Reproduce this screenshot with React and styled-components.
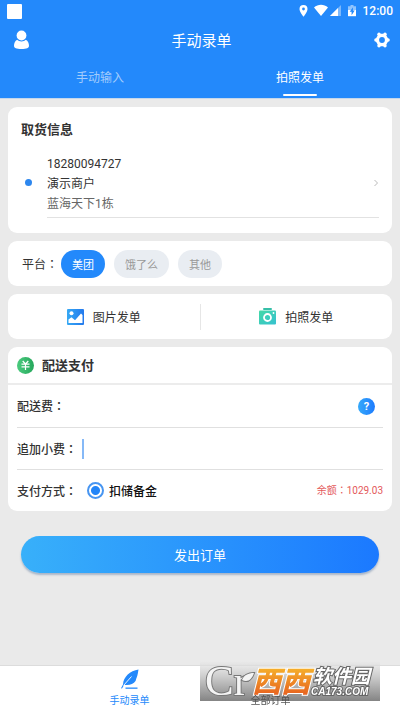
import React, { useState } from "react";
import styled, { createGlobalStyle } from "styled-components";

const GlobalStyle = createGlobalStyle`
  * {
    box-sizing: border-box;
  }
  body {
    margin: 0;
    background: #eaeaea;
    color: #333;
    font-family: "Noto Sans CJK SC", Roboto, sans-serif;
    font-size: 12px;
    line-height: 20px;
  }
  button,
  input {
    margin: 0;
    padding: 0;
    border: 0;
    background: none;
    color: inherit;
    font: inherit;
  }
  button {
    cursor: pointer;
  }
  svg {
    display: block;
    flex: none;
  }
`;

const Page = styled.div`
  display: flex;
  flex-direction: column;
  min-height: 100vh;
`;

const Header = styled.header`
  background: #2389fb;
  color: #fff;
  border-bottom: 1px solid #c5d8ec;
`;

const StatusBar = styled.div`
  display: flex;
  align-items: center;
  justify-content: space-between;
  height: 22px;
  padding: 0 7px;
`;

const StatusSquare = styled.div`
  width: 15px;
  height: 15px;
  border-radius: 1px;
  background: #fff;
`;

const StatusIcons = styled.div`
  display: flex;
  align-items: center;
  font-weight: 500;
`;

const Digits = styled.span`
  font-family: Roboto, "Noto Sans CJK SC", sans-serif;
`;

const Clock = styled(Digits)`
  margin-left: 6px;
`;

const TitleBar = styled.div`
  display: flex;
  align-items: center;
  justify-content: space-between;
  height: 35px;
  padding: 0 7px 0 10px;
`;

const Title = styled.h1`
  margin: 0;
  font-size: 15px;
  font-weight: 400;
`;

const IconButton = styled.button`
  display: flex;
  justify-content: center;
  width: 22px;
`;

const Tabs = styled.div`
  display: flex;
`;

const Tab = styled.button`
  flex: 1;
  display: flex;
  flex-direction: column;
  align-items: center;
  padding: 10px 0 2px;
  color: ${(props) => (props.$active ? "#fff" : "#a2ccfb")};

  &::after {
    content: "";
    width: 34px;
    height: 2px;
    margin-top: 7px;
    border-radius: 1px;
    background: ${(props) => (props.$active ? "#fff" : "transparent")};
  }
`;

const Main = styled.main`
  display: flex;
  flex-direction: column;
  gap: 8px;
  padding: 8px;
`;

const Card = styled.section`
  background: #fff;
  border-radius: 9px;
`;

const PickupCard = styled(Card)`
  padding: 12px 13px 15px;
`;

const CardTitle = styled.h2`
  margin: 0;
  font-size: 13px;
  line-height: 20px;
  font-weight: 700;
`;

const Address = styled.a`
  display: flex;
  align-items: center;
  margin-top: 14px;
  color: inherit;
  text-decoration: none;
`;

const Dot = styled.span`
  width: 7px;
  height: 7px;
  margin: 0 15px 6px 4px;
  border-radius: 50%;
  background: #2d87ee;
`;

const AddressBody = styled.span`
  flex: 1;
  display: flex;
  align-items: center;
  justify-content: space-between;
  padding-bottom: 4px;
  border-bottom: 1px solid #e2e2e2;
`;

const AddressLine = styled.span`
  display: block;
  height: 20px;
  color: ${(props) => (props.$muted ? "#666" : "#333")};
`;

const PlatformCard = styled(Card)`
  display: flex;
  align-items: center;
  gap: 9px;
  height: 45px;
  padding: 0 14px;
`;

const PlatformLabel = styled.span`
  margin-right: -6px;
`;

const Pill = styled.button`
  height: 28px;
  padding: 0 11px;
  border-radius: 14px;
  font-size: 11px;
  background: ${(props) => (props.$active ? "#2389fb" : "#e9edf2")};
  color: ${(props) => (props.$active ? "#fff" : "#999")};
`;

const SendCard = styled(Card)`
  display: flex;
  align-items: center;
  height: 45px;
`;

const SendButton = styled.button`
  flex: 1;
  display: flex;
  align-items: center;
  justify-content: center;
  gap: 9px;
  height: 26px;

  & + & {
    border-left: 1px solid #e6e6e6;
  }
`;

const PayHead = styled.div`
  display: flex;
  align-items: center;
  gap: 8px;
  height: 38px;
  padding: 0 9px;
  border-bottom: 2px solid #ececec;
`;

const PayRow = styled.div`
  display: flex;
  align-items: center;
  height: 42px;
  margin: 0 9px;

  & + & {
    border-top: 1px solid #e0e0e0;
  }
`;

const RowLabel = styled.label`
  font-weight: 500;
`;

const HelpButton = styled.button`
  width: 17px;
  height: 17px;
  margin: 0 8px 0 auto;
  border-radius: 50%;
  background: linear-gradient(90deg, #35a9fa, #1d7bfe);
  color: #fff;
  font-family: Roboto, sans-serif;
  font-size: 11px;
  line-height: 17px;
  font-weight: 700;
`;

const TipInput = styled.input`
  flex: 1;
  min-width: 0;
  height: 20px;
  margin-left: 5px;
  padding-left: 4px;
  border-left: 2px solid #86b9f7;
  outline: none;
`;

const Radio = styled.input`
  appearance: none;
  width: 17px;
  height: 17px;
  margin: 0 5px 0 10px;
  border: 2px solid #4795f1;
  border-radius: 50%;

  &:checked {
    background: radial-gradient(circle, #2385f8 4px, #fff 5px);
  }
`;

const RadioLabel = styled.label`
  color: #111;
  font-weight: 500;
`;

const Balance = styled(Digits)`
  margin-left: auto;
  color: #e4595b;
  font-size: 10px;
`;

const Submit = styled.button`
  height: 37px;
  margin: 17px 21px 24px;
  border-radius: 19px;
  background: linear-gradient(90deg, #38b0fa, #1b79ff);
  box-shadow: 0 2px 2px rgba(90, 120, 160, 0.45);
  color: #fff;
  font-size: 13px;
`;

const BottomNav = styled.nav`
  display: flex;
  height: 46px;
  margin-top: auto;
  padding: 0 59px;
  border-top: 1px solid #dcdcdc;
  background: #fff;
`;

const NavLink = styled.a`
  flex: 1;
  display: flex;
  flex-direction: column;
  align-items: center;
  justify-content: flex-end;
  gap: 2px;
  padding: 3px 0;
  color: ${(props) => (props.$active ? "#2389fb" : "#555")};
  font-size: 10px;
  line-height: 16px;
  text-decoration: none;
`;

const NavText = styled.span`
  position: relative;
  z-index: 2;
`;

const Watermark = styled.div`
  position: fixed;
  z-index: 1;
  right: 20px;
  bottom: 10px;
  pointer-events: none;
  background: linear-gradient(
    rgba(235, 235, 235, 0.6),
    rgba(195, 195, 195, 0.85) 40%,
    rgba(125, 125, 125, 0.95)
  );
`;

const UserIcon = () => (
  <svg width="17" height="20" viewBox="0 0 17 20" fill="#fff">
    <circle cx="8.5" cy="5.5" r="4.9" />
    <path d="M4.2 9.8C2 11 1 13.2 1 15.8 1 18 3.2 19 8.5 19S16 18 16 15.8c0-2.600-1-4.800-3.200-6-1.100 1.100-2.600 1.700-4.300 1.700s-3.200-.6-4.300-1.700z" />
  </svg>
);

const GearIcon = () => (
  <svg width="16" height="16" viewBox="0 0 16 16">
    <path
      d="M5.200 2.500L10.800 2.500L14 8L10.800 13.500L5.200 13.500L2 8Z"
      fill="#fff"
      stroke="#fff"
      strokeWidth="1.500"
      strokeLinejoin="round"
    />
    <g fill="#fff">
      <circle cx="5" cy="2.200" r="1.700" />
      <circle cx="11" cy="2.200" r="1.700" />
      <circle cx="14" cy="8" r="1.800" />
      <circle cx="11" cy="13.800" r="1.700" />
      <circle cx="5" cy="13.800" r="1.700" />
      <circle cx="2" cy="8" r="1.800" />
    </g>
    <circle cx="8" cy="8" r="2.900" fill="#2389fb" />
  </svg>
);

const DeviceIcons = () => (
  <svg width="58" height="14" viewBox="0 0 58 14" fill="#fff">
    <path
      fillRule="evenodd"
      d="M4.500 1a4 4 0 0 0-4 4c0 3.200 4 7.700 4 7.700s4-4.500 4-7.700a4 4 0 0 0-4-4zm0 2.600a1.400 1.400 0 1 1 0 2.800 1.400 1.400 0 0 1 0-2.800z"
    />
    <path d="M15 3.500C19-.1 25-.1 29 3.500L22 12z" />
    <path d="M42 1v11H31z" opacity=".4" />
    <path d="M39 4v8h-8z" />
    <path d="M51.500 1h3v1.200H57V6h-8V2.200h2.500z" opacity=".5" />
    <path d="M49 6h8v6.200h-8z" />
    <path d="M54 3.300L50.700 7.800h1.900v3.400l3.100-4.600h-1.800z" fill="#2389fb" />
  </svg>
);

const ChevronIcon = () => (
  <svg width="6" height="8" viewBox="0 0 6 8" fill="none" stroke="#bbb">
    <path d="M1.500 1l3 3-3 3" />
  </svg>
);

const PictureIcon = () => (
  <svg width="17" height="16" viewBox="0 0 17 16">
    <defs>
      <linearGradient id="picture">
        <stop stopColor="#36a9f4" />
        <stop offset="1" stopColor="#2379ed" />
      </linearGradient>
    </defs>
    <rect width="17" height="16" rx="1" fill="url(#picture)" />
    <circle cx="4.500" cy="4.300" r="2" fill="#fff" />
    <path d="M1.500 14V10.500l3-2.300 3.500 3 6-6.700 1.500 1.500V14z" fill="#fff" />
  </svg>
);

const CameraIcon = () => (
  <svg width="17" height="17" viewBox="0 0 17 17">
    <defs>
      <linearGradient id="camera" x2="1" y2="1">
        <stop stopColor="#43d9a6" />
        <stop offset="1" stopColor="#36c1d0" />
      </linearGradient>
    </defs>
    <rect x="4" y="0" width="9" height="2" rx="1" fill="#36bfa8" />
    <rect y="2.500" width="17" height="14" rx="1" fill="url(#camera)" />
    <circle cx="8.500" cy="9.500" r="3.500" fill="none" stroke="#fff" strokeWidth="1.800" />
    <circle cx="14.500" cy="5" r=".9" fill="#fff" />
  </svg>
);

const YuanIcon = () => (
  <svg width="17" height="17" viewBox="0 0 17 17">
    <defs>
      <linearGradient id="yuan">
        <stop stopColor="#4bcb7e" />
        <stop offset="1" stopColor="#26a75c" />
      </linearGradient>
    </defs>
    <circle cx="8.500" cy="8.500" r="8.500" fill="url(#yuan)" />
    <path
      d="M5.700 4l2.800 3 2.800-3M4.500 7.200h8M4.500 9.800h8M8.500 7v6"
      fill="none"
      stroke="#fff"
      strokeWidth="1.200"
    />
  </svg>
);

const FeatherIcon = () => (
  <svg width="20" height="21" viewBox="0 0 20 21" fill="#2389fb">
    <path d="M18.500.5C10 2 3.500 7.500 3 15.500L1 19.300l1 .3 2.200-3.800c4.600 1 9.300-.8 11.300-3.800.7-1.300.3-1.600 1.200-3.500C17.800 6 18 3 18.500.5z" />
    <path d="M3.500 16.500L11.500 7.500" fill="none" stroke="#fff" strokeWidth=".9" />
    <path d="M5.500 18.500h12v1.300h-12z" />
  </svg>
);

const WatermarkArt = () => (
  <svg width="180" height="40" viewBox="0 0 180 40" overflow="visible">
    <defs>
      <linearGradient id="orange" x2="0" y2="1">
        <stop offset=".2" stopColor="#f6b52c" />
        <stop offset="1" stopColor="#e4531d" />
      </linearGradient>
    </defs>
    <g fill="#f4f4f4" stroke="#777" strokeWidth="2" paintOrder="stroke">
      <text x="5" y="34" fontFamily="Liberation Serif, serif" fontSize="43">
        Cr
      </text>
      <path d="M42 19c2-5 6-7 12-7-2 6-6 10-12 7z" />
    </g>
    <g fontFamily="Noto Sans CJK SC, sans-serif" fontStyle="italic">
      <text
        x="52"
        y="31"
        fontSize="29"
        fontWeight="900"
        fill="url(#orange)"
        stroke="#fff"
        strokeWidth="2"
        paintOrder="stroke"
      >
        西西
      </text>
      <text
        x="113"
        y="22"
        fontSize="19"
        fontWeight="700"
        fill="#fff"
        stroke="#666"
        strokeWidth="2"
        paintOrder="stroke"
      >
        软件园
      </text>
    </g>
    <text
      x="111"
      y="34"
      fontFamily="Liberation Sans, sans-serif"
      fontSize="10"
      fontWeight="700"
      fontStyle="italic"
      fill="#fff"
      stroke="#666"
      strokeWidth="2"
      paintOrder="stroke"
    >
      CA173.COM
    </text>
  </svg>
);

// the zh-TW glyph sits in the middle of its cell
const ColonGlyph = styled.span`
  font-family: "Noto Sans CJK TC", sans-serif;
`;

const Colon = () => <ColonGlyph lang="zh-TW">：</ColonGlyph>;

const tabs = ["手动输入", "拍照发单"];
const platforms = ["美团", "饿了么", "其他"];

const App = () => {
  const [tab, setTab] = useState("拍照发单");
  const [platform, setPlatform] = useState("美团");

  return (
    <Page lang="zh-CN">
      <GlobalStyle />
      <Header>
        <StatusBar>
          <StatusSquare />
          <StatusIcons>
            <DeviceIcons />
            <Clock>12:00</Clock>
          </StatusIcons>
        </StatusBar>
        <TitleBar>
          <IconButton type="button" aria-label="我的">
            <UserIcon />
          </IconButton>
          <Title>手动录单</Title>
          <IconButton type="button" aria-label="设置">
            <GearIcon />
          </IconButton>
        </TitleBar>
        <Tabs>
          {tabs.map((name) => (
            <Tab
              key={name}
              type="button"
              $active={name === tab}
              onClick={() => setTab(name)}
            >
              {name}
            </Tab>
          ))}
        </Tabs>
      </Header>

      <Main>
        <PickupCard>
          <CardTitle>取货信息</CardTitle>
          <Address href="#">
            <Dot />
            <AddressBody>
              <span>
                <AddressLine>
                  <Digits>18280094727</Digits>
                </AddressLine>
                <AddressLine>演示商户</AddressLine>
                <AddressLine $muted>
                  蓝海天下<Digits>1</Digits>栋
                </AddressLine>
              </span>
              <ChevronIcon />
            </AddressBody>
          </Address>
        </PickupCard>

        <PlatformCard>
          <PlatformLabel>
            平台
            <Colon />
          </PlatformLabel>
          {platforms.map((name) => (
            <Pill
              key={name}
              type="button"
              $active={name === platform}
              onClick={() => setPlatform(name)}
            >
              {name}
            </Pill>
          ))}
        </PlatformCard>

        <SendCard>
          <SendButton type="button">
            <PictureIcon />
            图片发单
          </SendButton>
          <SendButton type="button">
            <CameraIcon />
            拍照发单
          </SendButton>
        </SendCard>

        <Card>
          <PayHead>
            <YuanIcon />
            <CardTitle>配送支付</CardTitle>
          </PayHead>
          <PayRow>
            <RowLabel as="span">
              配送费
              <Colon />
            </RowLabel>
            <HelpButton type="button">?</HelpButton>
          </PayRow>
          <PayRow>
            <RowLabel htmlFor="tip">
              追加小费
              <Colon />
            </RowLabel>
            <TipInput id="tip" type="text" inputMode="decimal" />
          </PayRow>
          <PayRow>
            <RowLabel as="span">
              支付方式
              <Colon />
            </RowLabel>
            <Radio id="reserve" type="radio" name="payment" defaultChecked />
            <RadioLabel htmlFor="reserve">扣储备金</RadioLabel>
            <Balance>
              余额
              <Colon />
              1029.03
            </Balance>
          </PayRow>
        </Card>
      </Main>

      <Submit type="button">发出订单</Submit>

      <BottomNav>
        <NavLink href="#" $active>
          <FeatherIcon />
          <NavText>手动录单</NavText>
        </NavLink>
        <NavLink href="#">
          <NavText>全部订单</NavText>
        </NavLink>
      </BottomNav>

      <Watermark>
        <WatermarkArt />
      </Watermark>
    </Page>
  );
};

export default App;
